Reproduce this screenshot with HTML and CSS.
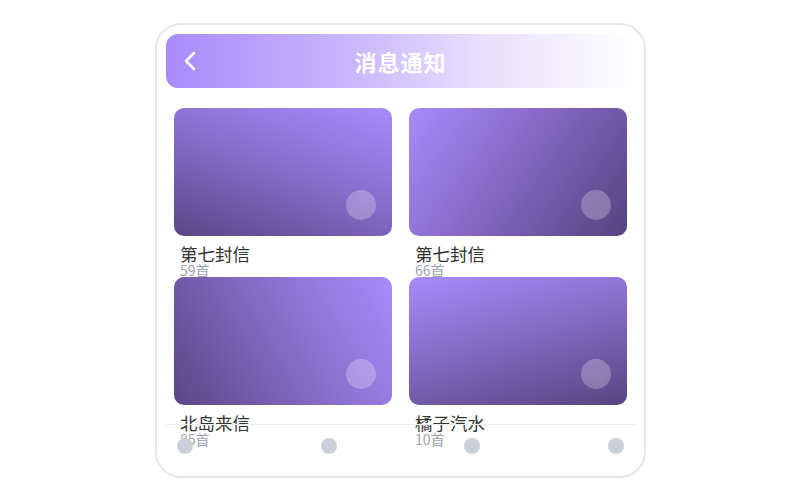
FILE: index.html
```html
<!DOCTYPE html>
<html lang="zh">
<head>
<meta charset="utf-8">
<link rel="stylesheet" href="styles.css">
</head>
<body>
<div class="phone">
  <header class="header">
    <span class="back">
      <svg width="14" height="20" viewBox="0 0 14 20"><path d="M11 2 L3 10 L11 18" fill="none" stroke="#fff" stroke-width="2.6" stroke-linecap="round" stroke-linejoin="round"/></svg>
    </span>
    <h1 class="title">消息通知</h1>
  </header>
  <div class="grid">
    <div class="item">
      <div class="cover c1"><span class="dot"></span></div>
      <div class="name">第七封信</div>
      <div class="count">59首</div>
    </div>
    <div class="item">
      <div class="cover c2"><span class="dot"></span></div>
      <div class="name">第七封信</div>
      <div class="count">66首</div>
    </div>
    <div class="item">
      <div class="cover c3"><span class="dot"></span></div>
      <div class="name">北岛来信</div>
      <div class="count">85首</div>
    </div>
    <div class="item">
      <div class="cover c4"><span class="dot"></span></div>
      <div class="name">橘子汽水</div>
      <div class="count">10首</div>
    </div>
  </div>
  <nav class="nav">
    <span class="nav-dot"></span>
    <span class="nav-dot"></span>
    <span class="nav-dot"></span>
    <span class="nav-dot"></span>
  </nav>
</div>
</body>
</html>
```
FILE: styles.css
```css
* { box-sizing: border-box; margin: 0; padding: 0; }
html, body { width: 800px; height: 500px; background: #fff; }
body {
  font-family: "Noto Sans CJK SC", "Noto Sans", sans-serif;
  padding-top: 23px;
}
.phone {
  position: relative;
  width: 491px;
  height: 455px;
  margin-left: 155px;
  border: 2px solid #e5e7eb;
  border-radius: 26px;
  padding: 9px 9px 0 9px;
  overflow: hidden;
  background: #fff;
}
.header {
  position: relative;
  height: 54px;
  border-radius: 12px;
  background: linear-gradient(90deg, #a78bfa 0%, #c9b8fc 40%, #e6dcfd 65%, #ffffff 100%);
  display: flex;
  align-items: center;
  justify-content: center;
}
.back {
  position: absolute;
  left: 17px;
  top: 17px;
  display: flex;
}
.title {
  color: #fff;
  font-size: 22px;
  font-weight: 700;
  letter-spacing: 1px;
}
.grid {
  display: grid;
  grid-template-columns: 218px 218px;
  column-gap: 17px;
  padding: 20px 8px 0 8px;
}
.cover {
  position: relative;
  height: 128px;
  border-radius: 10px;
}
.c1 { background: linear-gradient(200deg, #a78bfa 0%, #8a6fd0 45%, #5b4686 100%); }
.c2 { background: linear-gradient(125deg, #a78bfa 0%, #8669c6 45%, #55437f 100%); }
.c3 { background: linear-gradient(240deg, #a78bfa 0%, #8d72d2 40%, #5a4785 100%); }
.c4 { background: linear-gradient(165deg, #a78bfa 0%, #8a6fcd 40%, #574580 100%); }
.dot {
  position: absolute;
  right: 16px;
  bottom: 16px;
  width: 30px;
  height: 30px;
  border-radius: 50%;
  background: rgba(255,255,255,0.25);
}
.name {
  padding: 8px 0 0 6px;
  font-size: 17.5px;
  line-height: 20px;
  color: #333;
}
.count {
  padding-left: 6px;
  font-size: 14px;
  line-height: 13px;
  color: #9ca3af;
}
.nav {
  position: absolute;
  left: 9px;
  right: 9px;
  bottom: 0;
  height: 52px;
  border-top: 1px solid #eceef1;
  display: flex;
  justify-content: space-between;
  padding: 13px 11px 0 11px;
}
.nav-dot {
  width: 16px;
  height: 16px;
  border-radius: 50%;
  background: #cbd0d6;
}
```
